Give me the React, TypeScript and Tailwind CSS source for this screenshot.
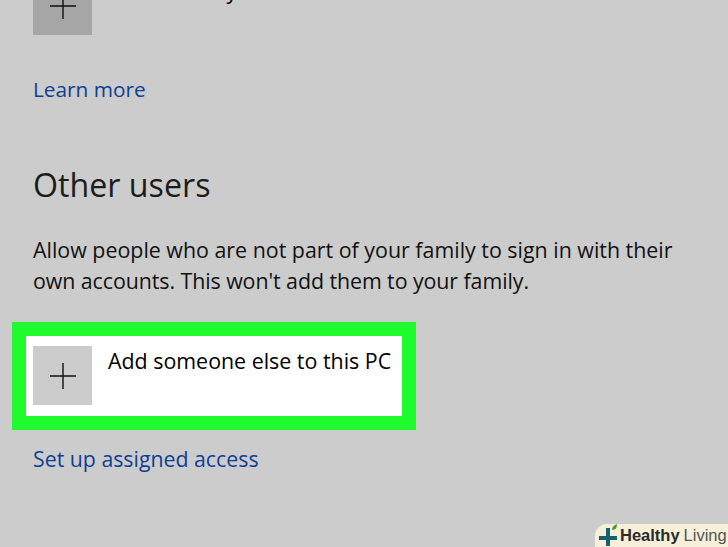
const font = "font-['Open_Sans',sans-serif]"

const PlusBox = ({ tone }: { tone: string }) => (
  <div className={`flex h-[59px] w-[59px] shrink-0 items-center justify-center ${tone}`}>
    <svg width="26" height="26" viewBox="0 0 26 26" fill="none" stroke="#111" strokeWidth="1.4">
      <path d="M13 0v26M0 13h26" />
    </svg>
  </div>
)

export default function App() {
  return (
    <div className={`h-[547px] w-[728px] overflow-hidden bg-[#cccccc] ${font} relative`}>
      <div className="-mt-[24px] flex gap-[16px] pl-[33px]">
        <PlusBox tone="bg-[#a6a6a6]" />
        <div className="ml-[6px] text-[21.4px] leading-[30px] text-black">Add a family member</div>
      </div>

      <div className="mt-[39px] pl-[33px] text-[20.8px] leading-[30px] text-[#0f3f94]">Learn more</div>

      <div className="mt-[59px] pl-[33px] text-[32.2px] leading-[44px] text-[#1c1c1c]">Other users</div>

      <div className="mt-[27px] pl-[33px] text-[21.4px] leading-[31px] text-[#111]">
        <div>Allow people who are not part of your family to sign in with their</div>
        <div className="tracking-[-0.08px]">own accounts. This won't add them to your family.</div>
      </div>

      <div className="ml-[12px] mt-[26px] h-[108px] w-[404px] border-[14px] border-[#1ffb2d] bg-white pl-[7px] pt-[10px]">
        <div className="flex gap-[16px]">
          <PlusBox tone="bg-[#cccccc]" />
          <div className="whitespace-nowrap text-[21.4px] leading-[30px] text-black">
            Add someone else to this PC
          </div>
        </div>
      </div>

      <div className="mt-[14px] pl-[33px] text-[21.3px] leading-[30px] text-[#0f3f94]">Set up assigned access</div>

      <div className="absolute bottom-0 right-0 flex h-[23px] w-[133px] items-center rounded-tl-[12px] bg-[#f6efd9] pl-[3px] font-['Liberation_Sans',sans-serif] text-[16.5px] leading-[23px] text-[#2b2b2b]">
        <svg width="22" height="23" viewBox="0 0 22 23" className="shrink-0">
          <path d="M8 4h4v8h7v4h-7v6H8v-6H1v-4h7z" fill="#17606d" />
          <path d="M14 6c0-3 2-5 5-6 0 3-1 6-5 6z" fill="#4f9a2f" />
        </svg>
        <span className="font-bold">Healthy</span>
        <span className="ml-[4px] text-[#555]">Living</span>
      </div>
    </div>
  )
}
